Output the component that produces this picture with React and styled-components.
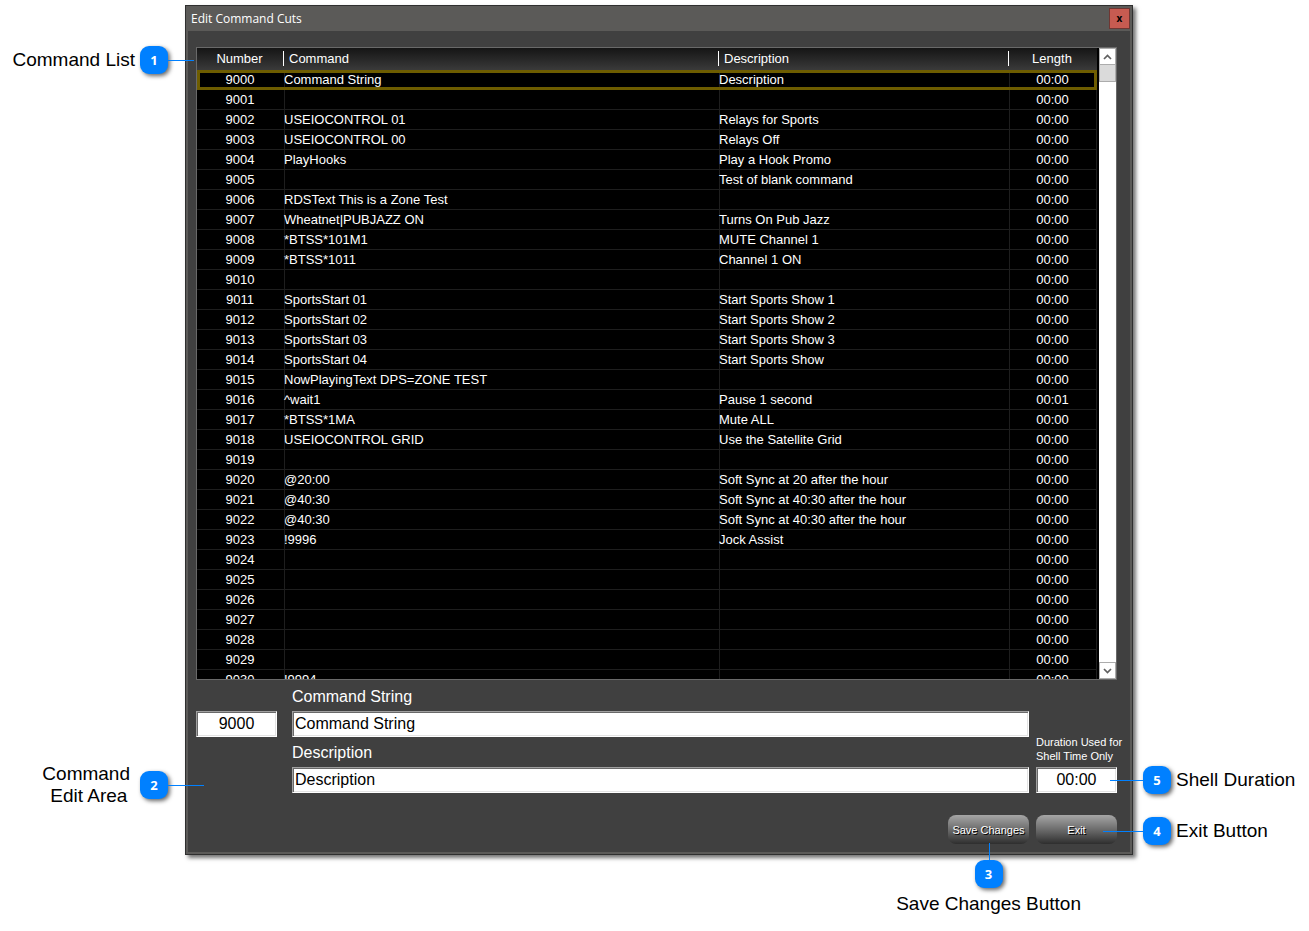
import React from "react";
import styled, { createGlobalStyle, css } from "styled-components";

const GlobalStyle = createGlobalStyle`
  *, *::before, *::after { box-sizing: border-box; }
  body {
    margin: 0;
    background: #fff;
    font-family: "Liberation Sans", Arial, sans-serif;
  }
`;

const rows = [
  ["9000", "Command String", "Description"],
  ["9001", "", ""],
  ["9002", "USEIOCONTROL 01", "Relays for Sports"],
  ["9003", "USEIOCONTROL 00", "Relays Off"],
  ["9004", "PlayHooks", "Play a Hook Promo"],
  ["9005", "", "Test of blank command"],
  ["9006", "RDSText This is a Zone Test", ""],
  ["9007", "Wheatnet|PUBJAZZ ON", "Turns On Pub Jazz"],
  ["9008", "*BTSS*101M1", "MUTE Channel 1"],
  ["9009", "*BTSS*1011", "Channel 1 ON"],
  ["9010", "", ""],
  ["9011", "SportsStart 01", "Start Sports Show 1"],
  ["9012", "SportsStart 02", "Start Sports Show 2"],
  ["9013", "SportsStart 03", "Start Sports Show 3"],
  ["9014", "SportsStart 04", "Start Sports Show"],
  ["9015", "NowPlayingText DPS=ZONE TEST", ""],
  ["9016", "^wait1", "Pause 1 second", "00:01"],
  ["9017", "*BTSS*1MA", "Mute ALL"],
  ["9018", "USEIOCONTROL GRID", "Use the Satellite Grid"],
  ["9019", "", ""],
  ["9020", "@20:00", "Soft Sync at 20 after the hour"],
  ["9021", "@40:30", "Soft Sync at 40:30 after the hour"],
  ["9022", "@40:30", "Soft Sync at 40:30 after the hour"],
  ["9023", "!9996", "Jock Assist"],
  ["9024", "", ""],
  ["9025", "", ""],
  ["9026", "", ""],
  ["9027", "", ""],
  ["9028", "", ""],
  ["9029", "", ""],
  ["9030", "!9994", ""],
];

const Page = styled.main`
  display: grid;
  grid-template-columns: 185px minmax(0, 1fr) 176px;
  padding-top: 5px;
`;

const Side = styled.aside`
  position: relative;
  z-index: 1;
  display: flex;
  flex-direction: column;
  justify-content: ${(p) => (p.$end ? "flex-end" : "space-between")};
  gap: 23px;
  padding: ${(p) => (p.$end ? "0 0 10px 10px" : "41px 17px 56px 0")};
`;

const Callout = styled.div`
  display: flex;
  align-items: center;
  justify-content: ${(p) => (p.$left ? "flex-end" : "flex-start")};
  gap: 5px;
  height: 28px;
  color: #000;
  font-size: 19px;
  line-height: 22px;
  white-space: nowrap;
`;

const CalloutText = styled.span`
  text-align: center;
  padding-right: ${(p) => (p.$wide ? "5px" : "0")};
`;

const leads = {
  right: css`left: 100%; top: 14px; height: 1px;`,
  left: css`right: 100%; top: 14px; height: 1px;`,
  up: css`bottom: 100%; left: 14px; width: 1px;`,
};

const Badge = styled.span`
  position: relative;
  display: flex;
  align-items: center;
  justify-content: center;
  flex: none;
  width: 28px;
  height: 28px;
  border-radius: 9px;
  background: #0080ff;
  box-shadow: 2px 2px 4px rgba(0, 0, 0, 0.6);
  color: #fff;
  font: 700 13px/28px "Open Sans", sans-serif;

  &::after {
    content: "";
    position: absolute;
    background: #0080ff;
    ${(p) => leads[p.$lead]}
    ${(p) => (p.$lead === "up" ? "height" : "width")}: ${(p) => p.$length}px;
  }
`;

const BottomCallout = styled.div`
  position: relative;
  z-index: 1;
  grid-column: 2;
  justify-self: end;
  display: flex;
  flex-direction: column;
  align-items: center;
  gap: 5px;
  margin: 5px 52px 0 0;
  font-size: 19px;
  line-height: 22px;
`;

const Window = styled.section`
  border: 1px solid #2f2f2f;
  background: #5b5a58;
  padding: 0 2px 2px;
  box-shadow: 3px 3px 4px rgba(0, 0, 0, 0.55);
`;

const TitleBar = styled.header`
  display: flex;
  align-items: center;
  justify-content: space-between;
  height: 25px;
  padding: 0 0 0 3px;
`;

const Title = styled.h1`
  margin: 0;
  color: #fff;
  font: 400 12px/25px "Open Sans", sans-serif;
`;

const CloseButton = styled.button`
  display: flex;
  align-items: center;
  justify-content: center;
  width: 21px;
  height: 21px;
  padding: 0 0 2px;
  border: 1px solid #6f3632;
  background: #c75b51;
  color: #000;
  font: 700 10px/16px "Open Sans", sans-serif;
`;

const Body = styled.div`
  background: #404040;
  padding: 16px 13px 8px 8px;
`;

const ListBox = styled.div`
  display: flex;
  height: 633px;
  border: 1px solid #696969;
  background: #000;
  overflow: hidden;
`;

const ListView = styled.div`
  flex: 1;
  min-width: 0;
  padding-right: 2px;
  overflow: hidden;
`;

const Table = styled.table`
  width: 100%;
  table-layout: fixed;
  border-collapse: separate;
  border-spacing: 0;
  color: #fff;
  font-size: 13px;
  line-height: 16px;
`;

const Head = styled.th`
  position: relative;
  width: ${(p) => p.$width || "auto"};
  height: 22px;
  padding: ${(p) => (p.$center ? "0 2px 0 0" : "0 5px")};
  background: linear-gradient(#151515, #3a3a3a);
  font-weight: 400;
  text-align: ${(p) => (p.$center ? "center" : "left")};

  &:not(:first-child)::before {
    content: "";
    position: absolute;
    left: -1px;
    top: 3px;
    width: 1px;
    height: 15px;
    background: #fff;
  }
`;

const Cell = styled.td`
  height: 20px;
  padding: 0 1px 0 0;
  border-bottom: 1px solid #1e1e1e;
  text-align: ${(p) => (p.$center ? "center" : "left")};
  white-space: nowrap;

  &:not(:first-child) {
    box-shadow: inset 1px 0 #1e1e1e;
  }

  &:last-child {
    box-shadow: inset 1px 0 #1e1e1e, inset -1px 0 #1e1e1e;
  }
`;

const Row = styled.tr`
  ${(p) =>
    p.$selected &&
    css`
      outline: 3px solid #6e5d00;
      outline-offset: -3px;
    `}
`;

const ScrollBar = styled.div`
  display: flex;
  flex-direction: column;
  flex: none;
  width: 17px;
  background: #fff;
`;

const ScrollButton = styled.button`
  display: flex;
  align-items: center;
  justify-content: center;
  width: 17px;
  height: 17px;
  padding: 0;
  border: 1px solid #acacac;
  background: #fff;
`;

const ScrollTrack = styled.div`
  flex: 1;
`;

const ScrollThumb = styled.div`
  height: 17px;
  border: 1px solid #acacac;
  border-top: 0;
  background: #dadada;
`;

const Form = styled.form`
  display: grid;
  grid-template-columns: 81px minmax(0, 1fr) 81px;
  column-gap: 7px;
  margin-top: 1px;
`;

const Field = styled.div`
  display: flex;
  flex-direction: column;
  grid-column: ${(p) => p.$column};
  grid-row: ${(p) => p.$row};
  align-self: end;
  padding-left: ${(p) => (p.$column === 2 ? "8px" : "0")};
`;

const Label = styled.label`
  color: #fff;
  font-size: 16px;
  line-height: 18px;
  padding: 7px 0 5px;
`;

const SmallLabel = styled.label`
  color: #fff;
  font-size: 11px;
  line-height: 14px;
  padding-bottom: 4px;
  white-space: nowrap;
`;

const TextBox = styled.input`
  width: 100%;
  height: 26px;
  padding: 0 2px 1px;
  border: 1px solid;
  border-color: #a0a0a0 #fff #fff #a0a0a0;
  border-radius: 0;
  box-shadow: inset 1px 1px #696969, inset -1px -1px #e3e3e3;
  background: #fff;
  color: #000;
  font: 16px/22px "Liberation Sans", Arial, sans-serif;
  text-align: ${(p) => (p.$center ? "center" : "left")};
`;

const Actions = styled.div`
  display: flex;
  justify-content: flex-end;
  gap: 7px;
  margin-top: 22px;
`;

const ActionButton = styled.button`
  width: 81px;
  height: 29px;
  padding: 0;
  border: 0;
  border-radius: 8px;
  background: linear-gradient(#a6a6a6, #6c6c6c 50%, #2e2e2e);
  color: #fff;
  font: 11px/14px "Liberation Sans", Arial, sans-serif;
  text-shadow: 1px 1px 0 #000;
  white-space: nowrap;
`;

function Chevron({ down }) {
  return (
    <svg width="9" height="6" viewBox="0 0 9 6" fill="none" stroke="#606060" strokeWidth="1.7" aria-hidden="true">
      <path d={down ? "M1 1l3.5 3.5L8 1" : "M1 5l3.5-3.5L8 5"} />
    </svg>
  );
}

export default function App() {
  return (
    <>
      <GlobalStyle />
      <Page>
        <Side>
          <Callout $left>
            <CalloutText>Command List</CalloutText>
            <Badge $lead="right" $length={26}>1</Badge>
          </Callout>
          <Callout $left>
            <CalloutText $wide>
              Command
              <br />
              &nbsp;Edit Area
            </CalloutText>
            <Badge $lead="right" $length={36}>2</Badge>
          </Callout>
        </Side>

        <Window>
          <TitleBar>
            <Title>Edit Command Cuts</Title>
            <CloseButton type="button" aria-label="Close">x</CloseButton>
          </TitleBar>
          <Body>
            <ListBox>
              <ListView>
                <Table>
                  <thead>
                    <tr>
                      <Head $width="87px" $center>Number</Head>
                      <Head>Command</Head>
                      <Head $width="290px">Description</Head>
                      <Head $width="88px" $center>Length</Head>
                    </tr>
                  </thead>
                  <tbody>
                    {rows.map(([number, command, description, length = "00:00"], i) => (
                      <Row key={number} $selected={i === 0}>
                        <Cell $center>{number}</Cell>
                        <Cell>{command}</Cell>
                        <Cell>{description}</Cell>
                        <Cell $center>{length}</Cell>
                      </Row>
                    ))}
                  </tbody>
                </Table>
              </ListView>
              <ScrollBar>
                <ScrollButton type="button" aria-label="Scroll up"><Chevron /></ScrollButton>
                <ScrollTrack><ScrollThumb /></ScrollTrack>
                <ScrollButton type="button" aria-label="Scroll down"><Chevron down /></ScrollButton>
              </ScrollBar>
            </ListBox>

            <Form onSubmit={(e) => e.preventDefault()}>
              <Field $column={1} $row={1}>
                <TextBox $center aria-label="Number" defaultValue="9000" />
              </Field>
              <Field $column={2} $row={1}>
                <Label htmlFor="command">Command String</Label>
                <TextBox id="command" defaultValue="Command String" />
              </Field>
              <Field $column={2} $row={2}>
                <Label htmlFor="description">Description</Label>
                <TextBox id="description" defaultValue="Description" />
              </Field>
              <Field $column={3} $row="1 / span 2">
                <SmallLabel htmlFor="duration">
                  Duration Used for
                  <br />
                  Shell Time Only
                </SmallLabel>
                <TextBox id="duration" $center defaultValue="00:00" />
              </Field>
            </Form>
            <Actions>
              <ActionButton type="button">Save Changes</ActionButton>
              <ActionButton type="button">Exit</ActionButton>
            </Actions>
          </Body>
        </Window>

        <Side $end>
          <Callout>
            <Badge $lead="left" $length={33}>5</Badge>
            <CalloutText>Shell Duration</CalloutText>
          </Callout>
          <Callout>
            <Badge $lead="left" $length={40}>4</Badge>
            <CalloutText>Exit Button</CalloutText>
          </Callout>
        </Side>

        <BottomCallout>
          <Badge $lead="up" $length={17}>3</Badge>
          <span>Save Changes Button</span>
        </BottomCallout>
      </Page>
    </>
  );
}
